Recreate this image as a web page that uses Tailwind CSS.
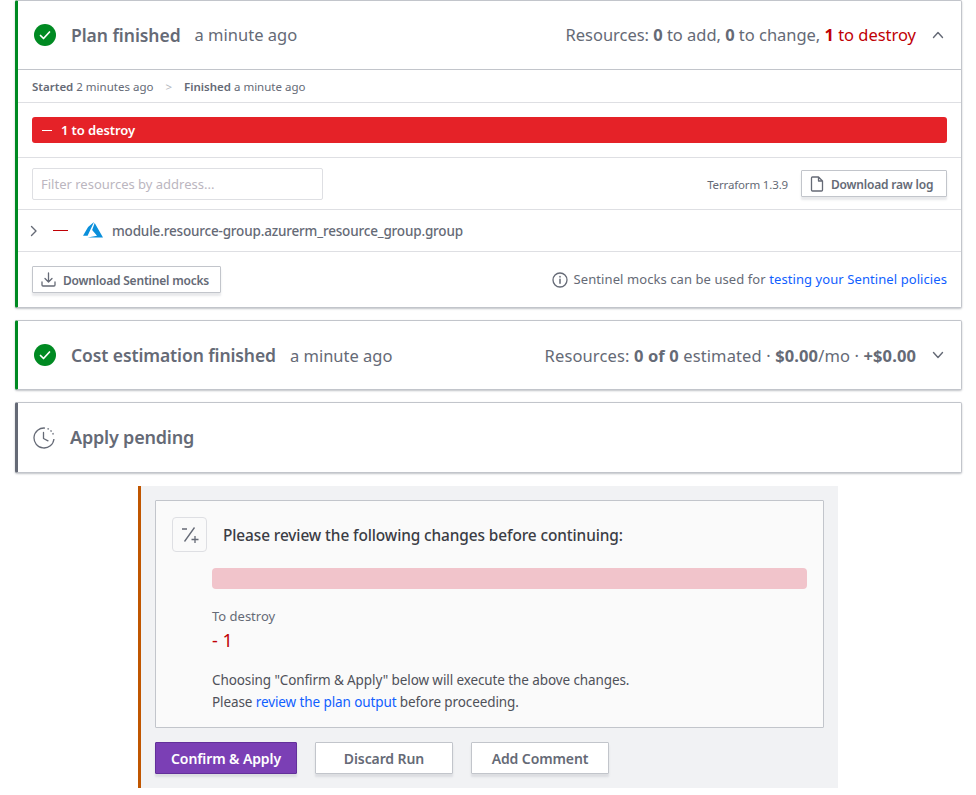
<!DOCTYPE html>
<html lang="en">
<head>
    <meta charset="UTF-8">
    <title>Run</title>
    <script src="https://cdn.jsdelivr.net/npm/@tailwindcss/browser@4"></script>
</head>
<body class="bg-white font-['Noto_Sans',sans-serif] text-[#656a76] w-[976px] h-[795px] overflow-hidden">
    <div class="pl-[15px] pr-[14px]">
        <!-- Plan -->
        <section class="h-[308px] bg-white border border-[#c2c5cb] border-l-[3px] border-l-[#008a22] rounded-[2px] shadow-[0_1px_2px_rgba(101,106,118,0.4)]">
            <header class="h-[69px] flex items-center pl-[16px] pr-[16px] border-b border-[#c2c5cb]">
                <svg class="w-[22px] h-[22px]" viewBox="0 0 22 22"><circle cx="11" cy="11" r="11" fill="#008a22"/><path d="M6.5 11.5l3 3 6-6.5" fill="none" stroke="#fff" stroke-width="1.7" stroke-linecap="round" stroke-linejoin="round"/></svg>
                <h2 class="ml-[15px] text-[17.5px] font-semibold tracking-[-0.05px]">Plan finished</h2>
                <span class="ml-[14px] text-[16.5px]">a minute ago</span>
                <span class="ml-auto text-[16.5px] tracking-[-0.03px]">Resources: <b class="font-bold">0</b> to add, <b class="font-bold">0</b> to change, <span class="text-[#c00005]"><b class="font-bold">1</b> to destroy</span></span>
                <svg class="w-[14px] h-[14px] ml-[15px]" viewBox="0 0 14 14"><path d="M2.5 9.5l4.5-5 4.5 5" fill="none" stroke="#656a76" stroke-width="1.4" stroke-linecap="round" stroke-linejoin="round"/></svg>
            </header>
            <div class="h-[33px] flex items-center px-[14px] pt-[1px] text-[11.5px] border-b border-[#dedfe3]">
                <span><b class="font-semibold">Started</b> 2 minutes ago</span>
                <span class="mx-[12px] text-[#b2b6bd]">&gt;</span>
                <span><b class="font-semibold">Finished</b> a minute ago</span>
            </div>
            <div class="h-[55px] flex items-center px-[14px] border-b border-[#dedfe3]">
                <div class="w-full h-[26px] bg-[#e52228] rounded-[3px] flex items-center pl-[10px] pt-[1px] text-white text-[13px] font-semibold tracking-[-0.1px]">
                    <span class="w-[10px] h-[1.5px] bg-white mr-[9px]"></span>1 to destroy
                </div>
            </div>
            <div class="h-[52px] flex items-center px-[14px] border-b border-[#dedfe3]">
                <div class="w-[291px] h-[32px] border border-[#dedfe3] rounded-[2px] flex items-center pl-[8px] pt-[2px] text-[13px] text-[#bbb6c0]">Filter resources by address...</div>
                <span class="ml-auto pt-[2px] text-[11.5px] tracking-[-0.15px]">Terraform 1.3.9</span>
                <button class="ml-[13px] w-[146px] h-[27px] border border-[#c2c5cb] bg-white rounded-[1px] shadow-[0_3px_2px_rgba(101,106,118,0.15)] flex items-center pl-[7px] pt-[2px] text-[12px] font-semibold tracking-[-0.2px]">
                    <svg class="w-[16px] h-[16px] mr-[6px] mb-[2px]" viewBox="0 0 16 16"><path d="M3.5 1h6l4 4v9a1 1 0 0 1-1 1h-9a1 1 0 0 1-1-1V2a1 1 0 0 1 1-1z M9.5 1v4h4" fill="none" stroke="#656a76" stroke-width="1.3" stroke-linejoin="round"/></svg>
                    Download raw log
                </button>
            </div>
            <div class="h-[42px] flex items-center pl-[11px] pt-[1px] border-b border-[#dedfe3]">
                <svg class="w-[10px] h-[12px]" viewBox="0 0 10 12"><path d="M2.5 1.5l4.5 4.5-4.5 4.5" fill="none" stroke="#656a76" stroke-width="1.4" stroke-linecap="round" stroke-linejoin="round"/></svg>
                <span class="ml-[14px] w-[15px] h-[1px] mb-[2px] bg-[#c00005]"></span>
                <svg class="ml-[15px] w-[20px] h-[15.5px] mb-[2px]" viewBox="0 2.7 24 18.6"><path d="M5.483 21.3H24L14.025 4.013l-3.038 8.347 5.836 6.938L5.483 21.3zM13.23 2.7L6.105 8.677 0 19.253h5.505v.014L13.23 2.7z" fill="#0a8fdb"/></svg>
                <span class="ml-[9px] text-[13.5px] tracking-[-0.18px] font-medium">module.resource-group.azurerm_resource_group.group</span>
            </div>
            <div class="flex items-center h-[54px] px-[14px] pt-[1px]">
                <button class="w-[189px] h-[27px] border border-[#c2c5cb] bg-white rounded-[1px] shadow-[0_3px_2px_rgba(101,106,118,0.15)] flex items-center pl-[8px] pt-[2px] text-[12px] font-semibold tracking-[-0.2px]">
                    <svg class="w-[15px] h-[15px] mr-[7px] mb-[2px]" viewBox="0 0 15 15"><path d="M7.5 1v8.5M4 6.5l3.5 3.5L11 6.5M1 10v3a1 1 0 0 0 1 1h11a1 1 0 0 0 1-1v-3" fill="none" stroke="#656a76" stroke-width="1.3" stroke-linecap="round" stroke-linejoin="round"/></svg>
                    Download Sentinel mocks
                </button>
                <svg class="ml-auto w-[16px] h-[16px]" viewBox="0 0 16 16"><circle cx="8" cy="8" r="7" fill="none" stroke="#656a76" stroke-width="1.3"/><path d="M8 7.3v4M8 4.5v.6" stroke="#656a76" stroke-width="1.5" stroke-linecap="round"/></svg>
                <span class="ml-[6px] pt-[1px] text-[13px] tracking-[0.08px]">Sentinel mocks can be used for <a class="text-[#1060ff]">testing your Sentinel policies</a></span>
            </div>
        </section>

        <!-- Cost estimation -->
        <section class="mt-[12px] h-[70px] bg-white border border-[#c2c5cb] border-l-[3px] border-l-[#008a22] rounded-[2px] shadow-[0_1px_2px_rgba(101,106,118,0.4)] flex items-center pl-[16px] pr-[16px]">
            <svg class="w-[22px] h-[22px]" viewBox="0 0 22 22"><circle cx="11" cy="11" r="11" fill="#008a22"/><path d="M6.5 11.5l3 3 6-6.5" fill="none" stroke="#fff" stroke-width="1.7" stroke-linecap="round" stroke-linejoin="round"/></svg>
            <h2 class="ml-[15px] text-[17.5px] font-semibold tracking-[-0.1px]">Cost estimation finished</h2>
            <span class="ml-[14px] pt-[2px] text-[16.5px]">a minute ago</span>
            <span class="ml-auto pt-[2px] text-[16.5px] tracking-[0.12px]">Resources: <b class="font-bold">0 of 0</b> estimated · <b class="font-bold">$0.00</b>/mo · <b class="font-bold">+$0.00</b></span>
            <svg class="w-[14px] h-[14px] ml-[15px]" viewBox="0 0 14 14"><path d="M2.5 4.5l4.5 5 4.5-5" fill="none" stroke="#656a76" stroke-width="1.4" stroke-linecap="round" stroke-linejoin="round"/></svg>
        </section>

        <!-- Apply pending -->
        <section class="mt-[12px] h-[71px] bg-white border border-[#c2c5cb] border-l-[3px] border-l-[#656a76] rounded-[2px] shadow-[0_1px_2px_rgba(101,106,118,0.4)] flex items-center pl-[15px]">
            <svg class="w-[22px] h-[22px]" viewBox="0 0 22 22"><path d="M12 1.05A10 10 0 1 0 20.95 12" fill="none" stroke="#656a76" stroke-width="1.3"/><path d="M14.5 1.6a10 10 0 0 1 6 6.4" fill="none" stroke="#656a76" stroke-width="1.3" stroke-dasharray="1.5 2"/><path d="M10.5 5.5v6l4.5 2.3" fill="none" stroke="#656a76" stroke-width="1.3" stroke-linecap="round" stroke-linejoin="round"/></svg>
            <h2 class="ml-[15px] text-[18px] font-semibold tracking-[-0.2px]">Apply pending</h2>
        </section>
    </div>

    <!-- Review -->
    <section class="ml-[138px] mt-[13px] w-[700px] h-[302px] bg-[#f1f2f4] border-l-[3px] border-l-[#c05600] pl-[14px] pr-[14px] pt-[14px]">
        <div class="h-[228px] bg-[#fafafa] border border-[#c2c5cb] rounded-[1px] pl-[16px] pr-[16px] pt-[16px]">
            <div class="flex items-center">
                <span class="w-[35px] h-[35px] border border-[#dedfe3] rounded-[4px] flex items-center justify-center">
                    <svg class="w-[18px] h-[18px]" viewBox="0 0 18 18"><path d="M1 3h5M13.5 1.5L3.5 15.5M10.5 13.5h7M14 10v7" fill="none" stroke="#656a76" stroke-width="1.3"/></svg>
                </span>
                <h3 class="ml-[16px] pt-[2px] text-[15.4px] font-medium text-[#3b3d45] tracking-[-0.1px]">Please review the following changes before continuing:</h3>
            </div>
            <div class="ml-[40px] mt-[16px] h-[21px] bg-[#f1c4cb] rounded-[4px]"></div>
            <div class="ml-[40px] mt-[17px] text-[13px] leading-[20px]">To destroy</div>
            <div class="ml-[40px] mt-[2px] text-[#c00005] text-[18px] leading-[24px]">- 1</div>
            <p class="ml-[40px] mt-[18px] text-[13.5px] leading-[21.5px] text-[#4f5159] tracking-[-0.1px]">Choosing "Confirm &amp; Apply" below will execute the above changes.<br>Please <a class="text-[#1060ff]">review the plan output</a> before proceeding.</p>
        </div>
        <div class="mt-[14px] flex gap-[18px] text-[14px] font-semibold tracking-[-0.1px]">
            <button class="w-[142px] h-[32px] pt-[1px] bg-[#7b3fb5] border border-[#63309a] rounded-[1px] text-white shadow-[0_3px_2px_rgba(101,106,118,0.15)]">Confirm &amp; Apply</button>
            <button class="w-[138px] h-[32px] pt-[1px] bg-white border border-[#c2c5cb] rounded-[1px] shadow-[0_3px_2px_rgba(101,106,118,0.15)]">Discard Run</button>
            <button class="w-[138px] h-[32px] pt-[1px] bg-white border border-[#c2c5cb] rounded-[1px] shadow-[0_3px_2px_rgba(101,106,118,0.15)]">Add Comment</button>
        </div>
    </section>
</body>
</html>
